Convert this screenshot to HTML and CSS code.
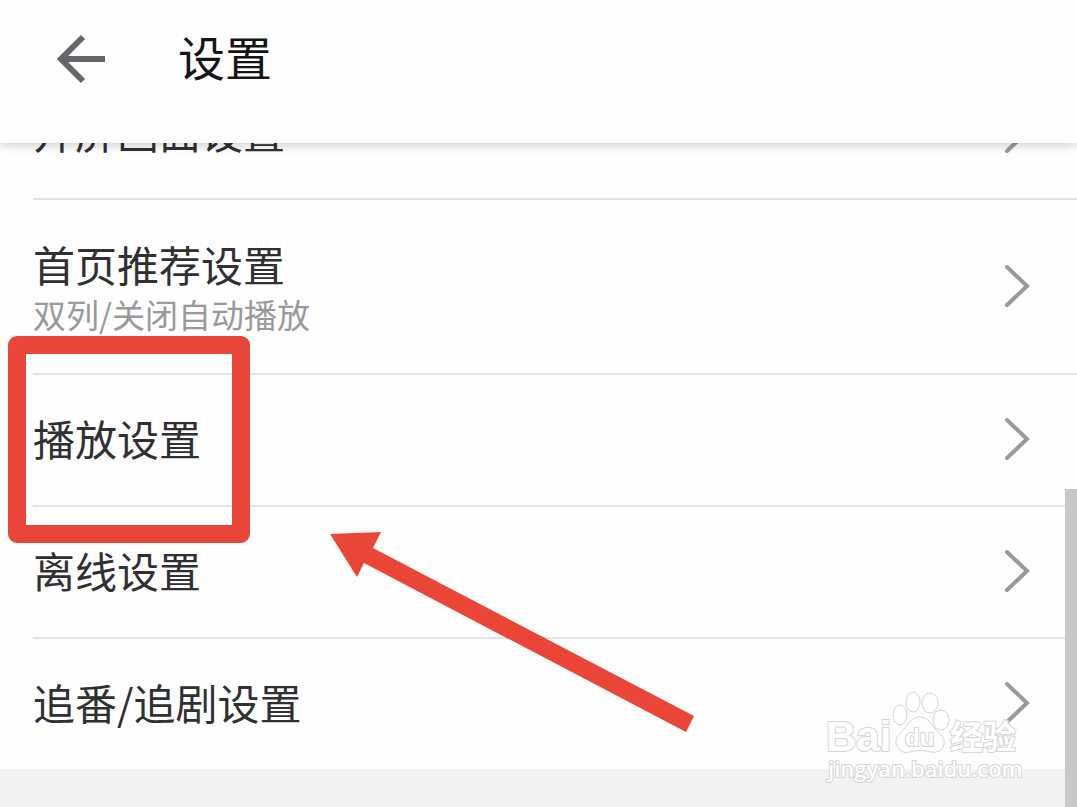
FILE: index.html
```html
<!DOCTYPE html>
<html lang="zh-CN">
<head>
    <meta charset="UTF-8">
    <meta name="viewport" content="width=device-width, initial-scale=1.0">
    <title>设置</title>
    <link rel="stylesheet" href="styles.css">
</head>
<body>
    <header class="header">
        <button class="back" type="button" aria-label="返回">
            <svg width="50" height="50" viewBox="0 0 50 50">
                <path d="M27 3 L5 25 L27 47 M5 25 H49" fill="none" stroke="#64666a" stroke-width="6"/>
            </svg>
        </button>
        <h1>设置</h1>
    </header>

    <main class="content">
        <div class="scrollbar"></div>
        <ul class="list">
            <li>
                <a class="row" href="#">
                    <span class="label">开屏画面设置</span>
                    <svg class="chevron" viewBox="0 0 26 44"><path d="M3 3 L23 22 L3 41"/></svg>
                </a>
            </li>
            <li>
                <a class="row" href="#">
                    <span class="label with-note">首页推荐设置
                        <small>双列/关闭自动播放</small>
                    </span>
                    <svg class="chevron" viewBox="0 0 26 44"><path d="M3 3 L23 22 L3 41"/></svg>
                </a>
            </li>
            <li>
                <a class="row" href="#">
                    <span class="label">播放设置</span>
                    <svg class="chevron" viewBox="0 0 26 44"><path d="M3 3 L23 22 L3 41"/></svg>
                </a>
                <div class="highlight"></div>
                <svg class="arrow" width="368" height="204" viewBox="0 0 368 204">
                    <path d="M2 4 L53 2 L45 18 L366 186 L358 202 L36 33 L29 47 Z" fill="#e94637"/>
                </svg>
            </li>
            <li>
                <a class="row" href="#">
                    <span class="label">离线设置</span>
                    <svg class="chevron" viewBox="0 0 26 44"><path d="M3 3 L23 22 L3 41"/></svg>
                </a>
            </li>
            <li>
                <a class="row" href="#">
                    <span class="label">追番/追剧设置</span>
                    <svg class="chevron" viewBox="0 0 26 44"><path d="M3 3 L23 22 L3 41"/></svg>
                </a>
            </li>
        </ul>
    </main>

    <svg class="watermark" width="200" height="100" viewBox="0 0 200 100">
        <ellipse cx="76" cy="25" rx="7" ry="10"/>
        <ellipse cx="89" cy="12" rx="7" ry="10"/>
        <ellipse cx="106" cy="13" rx="8" ry="10"/>
        <ellipse cx="117" cy="30" rx="8" ry="10"/>
        <path d="M96 27 C104 27 107 34 111 39 C116 44 121 47 120 54 C119 61 113 63 107 62 C100 60 92 60 86 62 C79 64 73 60 72 53 C71 47 76 44 80 39 C84 34 88 27 96 27 Z"/>
        <text class="wm-name" x="2" y="61">Bai</text>
        <text class="wm-du" x="81" y="56">du</text>
        <text class="wm-cn" x="126" y="59">经验</text>
        <text class="wm-url" x="4" y="87">jingyan.baidu.com</text>
    </svg>
</body>
</html>
```
FILE: styles.css
```css
* {
    box-sizing: border-box;
}
body {
    margin: 0;
    min-height: 100vh;
    display: flex;
    flex-direction: column;
    position: relative;
    overflow: hidden;
    background: #f1f2f4;
    color: #303032;
    font-family: "Noto Sans CJK SC", sans-serif;
}
.header {
    display: flex;
    align-items: center;
    gap: 72px;
    height: 143px;
    padding: 0 56px 25px;
    background: #fefefe;
    box-shadow: 0 2px 10px rgba(0,0,0,0.2);
    position: relative;
    z-index: 2;
}
.back {
    display: flex;
    padding: 0;
    border: none;
    background: none;
    cursor: pointer;
}
h1 {
    margin: 0;
    padding-bottom: 6px;
    font-size: 47px;
    font-weight: 400;
    line-height: 56px;
    color: #151515;
}
.content {
    flex: 1;
    position: relative;
}
/* list is scrolled partly under the header */
.list {
    list-style: none;
    margin: -75px 0 0;
    padding: 0;
    background: #fefefe;
}
.list li {
    position: relative;
    padding-left: 33px;
}
.row {
    display: flex;
    align-items: center;
    justify-content: space-between;
    min-height: 130px;
    padding: 0 47px 2px 0;
    color: inherit;
    text-decoration: none;
}
.list li + li .row {
    border-top: 2px solid #e3e3e4;
    min-height: 132px;
}
.label {
    padding-bottom: 3px;
    font-size: 42px;
    line-height: 56px;
}
.with-note {
    padding: 36px 0 35px;
}
.label small {
    display: block;
    font-size: 33px;
    line-height: 44px;
    color: #999;
}
.chevron {
    width: 26px;
    height: 44px;
    fill: none;
    stroke: #999;
    stroke-width: 4;
    stroke-linecap: round;
}
.scrollbar {
    position: absolute;
    top: 346px;
    right: 0;
    bottom: 0;
    width: 12px;
    background: #c8c8c8;
    z-index: 1;
}
.highlight {
    position: absolute;
    top: -37px;
    left: 8px;
    width: 242px;
    height: 207px;
    border: 18px solid #e94637;
    border-radius: 9px;
    pointer-events: none;
    z-index: 1;
}
.arrow {
    position: absolute;
    top: 157px;
    left: 328px;
    pointer-events: none;
    z-index: 1;
}
.watermark {
    position: absolute;
    right: 53px;
    bottom: 17px;
    fill: #fff;
    stroke: #d4d4d4;
    stroke-width: 1;
    pointer-events: none;
    z-index: 1;
}
.watermark text {
    paint-order: stroke;
    stroke-width: 2;
    font-weight: 700;
}
.wm-name {
    font-family: "Liberation Sans", sans-serif;
    font-size: 42px;
}
.wm-du {
    font-family: "Liberation Sans", sans-serif;
    font-size: 24px;
}
.wm-cn {
    font-size: 33px;
}
.watermark .wm-url {
    font-family: "Open Sans", sans-serif;
    font-size: 22px;
    font-weight: 600;
}
```
